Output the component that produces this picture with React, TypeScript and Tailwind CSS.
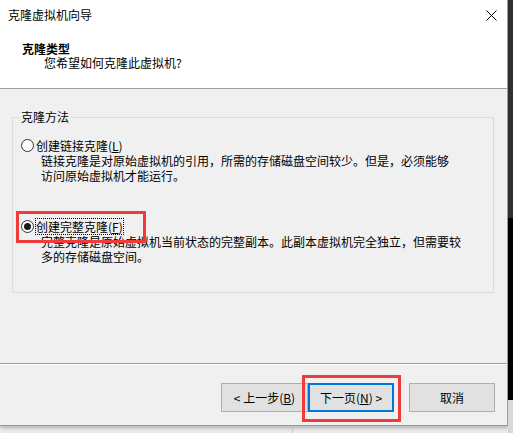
import React from "react";

const font = { fontFamily: '"Noto Sans CJK SC", "Microsoft YaHei", sans-serif' };

function Radio({ checked }: { checked?: boolean }) {
  return (
    <span className="w-[13px] h-[13px] rounded-full border border-[#333333] bg-white flex items-center justify-center shrink-0">
      {checked && <span className="w-[7px] h-[7px] rounded-full bg-[#1a1a1a]" />}
    </span>
  );
}

export default function App() {
  return (
    <div className="w-[513px] h-[433px] flex bg-[#ececec] overflow-hidden text-[12px] text-black" style={font}>
      <div className="w-[508px] h-[433px] flex flex-col">
        <div className="w-[508px] flex flex-col border-r border-b border-[#9a9a9a] shadow-[0_2px_4px_rgba(0,0,0,0.25)] bg-[#f0f0f0]">
          {/* title bar + header (white) */}
          <div className="bg-white">
            <div className="h-[30px] flex items-center justify-between pl-2 pr-[9px]">
              <span className="leading-[16px]">克隆虚拟机向导</span>
              <svg width="11" height="11" viewBox="0 0 11 11" className="mr-[1px]">
                <path d="M0.5 0.5 L10.5 10.5 M10.5 0.5 L0.5 10.5" stroke="#000" strokeWidth="1" fill="none" />
              </svg>
            </div>
            <div className="h-[58px] pt-[12px]">
              <div className="pl-[22px] font-bold leading-[14px]">克隆类型</div>
              <div className="pl-[44px] leading-[14px]">您希望如何克隆此虚拟机?</div>
            </div>
          </div>
          <div className="h-px bg-[#a0a0a0]" />
          {/* body */}
          <div className="h-[274px] px-[12px] pt-[28px]">
            <div className="relative h-[176px] w-[482px] border border-[#dcdcdc] pt-[20px]">
              <span className="absolute -top-[9px] left-[7px] px-[1px] bg-[#f0f0f0] leading-[16px]">克隆方法</span>
              <div className="flex items-center pl-[8px] h-[15px]">
                <Radio />
                <span className="ml-[2px] leading-[15px]">
                  创建链接克隆(<span className="underline">L</span>)
                </span>
              </div>
              <div className="pl-[28px] leading-[15px]">
                <div>链接克隆是对原始虚拟机的引用，所需的存储磁盘空间较少。但是，必须能够</div>
                <div>访问原始虚拟机才能运行。</div>
              </div>
              <div className="flex items-center pl-[8px] h-[15px] mt-[36px]">
                <Radio checked />
                <span className="ml-[2px] leading-[15px] outline outline-1 outline-dotted outline-black">
                  创建完整克隆(<span className="underline">F</span>)
                </span>
              </div>
              <div className="pl-[28px] leading-[15px]">
                <div>完整克隆是原始虚拟机当前状态的完整副本。此副本虚拟机完全独立，但需要较</div>
                <div>多的存储磁盘空间。</div>
              </div>
              <div className="absolute left-[3px] top-[93px] w-[130px] h-[32px] border-[3px] border-[#ef3b3b]" />
            </div>
          </div>
          <div className="h-px bg-[#a0a0a0]" />
          <div className="h-px bg-white" />
          {/* footer */}
          <div className="h-[60px] relative flex items-start pt-[18px] pl-[221px]">
            <button className="w-[87px] h-[29px] bg-[#e1e1e1] border border-[#adadad] leading-[16px]">
              &lt; 上一步(<span className="underline">B</span>)
            </button>
            <button className="w-[86px] h-[29px] bg-[#e1e1e1] border-2 border-[#0078d7] leading-[16px]">
              下一页(<span className="underline">N</span>) &gt;
            </button>
            <button className="ml-[15px] w-[86px] h-[29px] bg-[#e1e1e1] border border-[#adadad] leading-[16px]">
              取消
            </button>
            <div className="absolute left-[302px] top-[10px] w-[99px] h-[47px] border-[3px] border-[#ef3b3b]" />
          </div>
        </div>
        <div className="flex-1 flex">
          <div className="w-[293px] border-r border-[#c8c8c8]" />
        </div>
      </div>
      <div className="w-[5px] h-[433px] flex flex-col">
        <div className="h-[218px] bg-[#2f2f2f]" />
        <div className="h-[182px] bg-black" />
        <div className="flex-1 bg-[#d8d8d8]" />
      </div>
    </div>
  );
}
